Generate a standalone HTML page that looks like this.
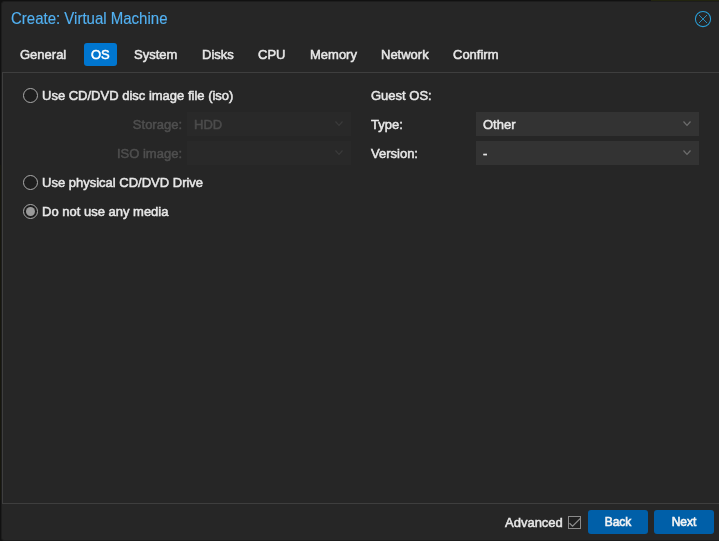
<!DOCTYPE html>
<html><head><meta charset="utf-8">
<style>
html,body{margin:0;padding:0;width:719px;height:541px;overflow:hidden;background:#111111;}
body{font-family:"Liberation Sans",sans-serif;font-size:13px;color:#e8e8e8;position:relative;-webkit-text-stroke:0.5px currentColor;}
.topstrip{position:absolute;left:651px;top:0;width:68px;height:1px;background:#22240f;}
.win{position:absolute;left:1px;top:1px;width:740px;height:540px;background:#262626;border:1px solid #1d1d1d;box-sizing:border-box;border-radius:3px;}
.lcol{position:absolute;left:0;top:165px;width:1px;height:335px;background:#16160d;}
.t{position:absolute;white-space:nowrap;line-height:15px;will-change:transform;transform:scaleY(1.04);transform-origin:0 12px;}
.title{position:absolute;left:11px;top:10px;font-size:15px;color:#52b1f2;-webkit-text-stroke:0.15px currentColor;white-space:nowrap;line-height:17px;transform:scaleY(1.06);transform-origin:0 13.7px;will-change:transform;}
.close{position:absolute;left:694px;top:10px;width:18px;height:18px;}
.tab{will-change:transform;position:absolute;top:43px;height:23px;line-height:23px;padding:0 7px;white-space:nowrap;border-radius:3px;}
.tab.act{background:#0076d0;color:#fff;}
.s{display:inline-block;line-height:15px;vertical-align:baseline;transform:scaleY(1.05);transform-origin:0 12px;}
.panel{position:absolute;left:2px;top:72px;width:760px;height:432px;border:1px solid #3e3e3e;box-sizing:border-box;}
.radio{position:absolute;left:23px;width:15px;height:15px;box-sizing:border-box;border:1px solid #ababab;border-radius:50%;background:#1e1e1e;}
.radio.on::after{content:"";position:absolute;left:2px;top:2px;width:9px;height:9px;border-radius:50%;background:#9a9a9a;}
.field{position:absolute;height:24px;background:#333333;}
.field .v{will-change:transform;transform:scaleY(1.04);transform-origin:0 16.5px;position:absolute;left:7px;top:1px;line-height:24px;white-space:nowrap;}
.chev{position:absolute;right:7px;top:8px;width:10px;height:8px;}
.t.dis{color:#4f4f4f;}
.field.dis{background:#292929;color:#4c4c4c;}
.btn{will-change:transform;position:absolute;top:510px;width:60px;height:24px;background:#005fa8;border-radius:3px;color:#f4f4f4;text-align:center;line-height:24px;font-size:12px;-webkit-text-stroke:0.6px currentColor;}
.cb{position:absolute;left:568px;top:516px;width:13px;height:13px;box-sizing:border-box;border:1px solid #8a8a8a;background:#202020;}
</style></head><body>
<div class="lcol"></div>
<div class="win"></div>
<div class="topstrip"></div>
<div class="title">Create: Virtual Machine</div>
<svg class="close" viewBox="0 0 18 18"><circle cx="9" cy="9" r="7.6" fill="none" stroke="#2a9ed6" stroke-width="1.05"/><path d="M5 5L13 13M13 5L5 13" stroke="#2a9ed6" stroke-width="0.85"/></svg>

<div class="tab" style="left:13px"><span class="s">General</span></div>
<div class="tab act" style="left:84px"><span class="s">OS</span></div>
<div class="tab" style="left:127px"><span class="s">System</span></div>
<div class="tab" style="left:195px"><span class="s">Disks</span></div>
<div class="tab" style="left:251px"><span class="s">CPU</span></div>
<div class="tab" style="left:303px"><span class="s">Memory</span></div>
<div class="tab" style="left:374px"><span class="s">Network</span></div>
<div class="tab" style="left:446px"><span class="s">Confirm</span></div>

<div class="panel"></div>

<div class="radio" style="top:88px"></div>
<div class="t" style="left:42px;top:88px">Use CD/DVD disc image file (iso)</div>

<div class="t dis" style="left:0;width:182px;text-align:right;top:117px">Storage:</div>
<div class="field dis" style="left:187px;width:164px;top:112px"><span class="v">HDD</span><svg class="chev" viewBox="0 0 10 8"><path d="M1.5 1.5L5 5.3L8.5 1.5" fill="none" stroke="#3b3b3b" stroke-width="1.2"/></svg></div>
<div class="t dis" style="left:0;width:182px;text-align:right;top:146px">ISO image:</div>
<div class="field dis" style="left:187px;width:164px;top:141px"><svg class="chev" viewBox="0 0 10 8"><path d="M1.5 1.5L5 5.3L8.5 1.5" fill="none" stroke="#3b3b3b" stroke-width="1.2"/></svg></div>

<div class="radio" style="top:175px"></div>
<div class="t" style="left:42px;top:175px">Use physical CD/DVD Drive</div>
<div class="radio on" style="top:204px"></div>
<div class="t" style="left:42px;top:204px">Do not use any media</div>

<div class="t" style="left:371px;top:88px">Guest OS:</div>
<div class="t" style="left:371px;top:117px">Type:</div>
<div class="field" style="left:476px;width:223px;top:112px"><span class="v">Other</span><svg class="chev" viewBox="0 0 10 8"><path d="M1.5 1.5L5 5.3L8.5 1.5" fill="none" stroke="#6e6e6e" stroke-width="1.2"/></svg></div>
<div class="t" style="left:371px;top:146px">Version:</div>
<div class="field" style="left:476px;width:223px;top:141px"><span class="v">-</span><svg class="chev" viewBox="0 0 10 8"><path d="M1.5 1.5L5 5.3L8.5 1.5" fill="none" stroke="#6e6e6e" stroke-width="1.2"/></svg></div>

<div class="t" style="left:505px;top:515px">Advanced</div>
<div class="cb"><svg style="position:absolute;left:-1px;top:-1px" width="13" height="13" viewBox="0 0 13 13"><path d="M1.5 7.2L4.6 10.2L12.4 2.4" fill="none" stroke="#8c8c8c" stroke-width="1.3"/></svg></div>
<div class="btn" style="left:588px"><span class="s">Back</span></div>
<div class="btn" style="left:654px"><span class="s">Next</span></div>
</body></html>
